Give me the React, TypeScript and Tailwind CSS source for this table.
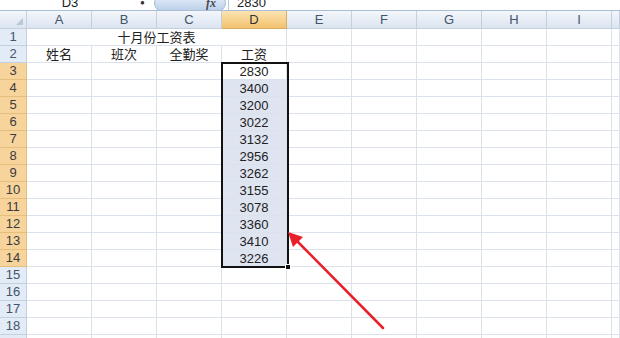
import React from 'react';

const cols = ['A', 'B', 'C', 'D', 'E', 'F', 'G', 'H', 'I', 'J'];
const wages = ['2830', '3400', '3200', '3022', '3132', '2956', '3262', '3155', '3078', '3360', '3410', '3226'];
const headerRow2 = ['姓名', '班次', '全勤奖', '工资'];
const ROWS = 19;

const font = { fontFamily: '"Liberation Sans", "Noto Sans CJK SC", sans-serif' };

function FormulaStrip() {
  return (
    <div className="h-[11px] overflow-hidden bg-white border-b border-[#a9bdd6]">
      <div className="flex items-center h-[18px] -mt-[6px] text-[13px] text-[#222]">
        <div className="w-[140px] text-center">D3</div>
        <div className="w-[14px] text-[8px] text-[#333]">●</div>
        <div className="w-[72px] h-[18px] rounded-full bg-gradient-to-b from-[#e9f1fb] to-[#b9cfe8] border border-[#a4bcd9] flex items-center justify-end pr-[9px]">
          <span className="italic text-[12px] font-bold text-[#4a4a4a]" style={{ fontFamily: '"Liberation Serif", serif' }}>
            fx
          </span>
        </div>
        <div className="w-px h-full bg-[#b9c9dd] ml-[2px]" />
        <div className="pl-[8px]">2830</div>
      </div>
    </div>
  );
}

function ColHeader({ label }: { label: string }) {
  const active = label === 'D';
  return (
    <div
      className={`h-[18px] flex items-center justify-center text-[13px] border-r border-b ${
        active
          ? 'bg-gradient-to-b from-[#fbe3b0] to-[#f3c26e] border-[#d9ad66] text-[#333]'
          : 'bg-gradient-to-b from-[#f4f7fb] to-[#dbe4f0] border-[#c3d0e0] text-[#44546a]'
      }`}
    >
      {label === 'J' ? '' : label}
    </div>
  );
}

function RowHeader({ n }: { n: number }) {
  const active = n >= 3 && n <= 14;
  return (
    <div
      className={`h-[17px] flex items-center justify-center text-[13px] border-r border-b ${
        active
          ? 'bg-[#f7d49b] border-[#e5bd7c] text-[#3b3b3b]'
          : 'bg-[#e3ebf6] border-[#c3d0e0] text-[#44546a]'
      }`}
    >
      {n}
    </div>
  );
}

function Cell({ text, selected }: { text?: string; selected?: boolean }) {
  return (
    <div
      className={`h-[17px] flex items-center justify-center pt-px text-[13px] text-[#222] border-r border-b border-[#dce2ec] whitespace-nowrap ${
        selected ? 'bg-[#dfe4f1]' : 'bg-white'
      }`}
    >
      {text}
    </div>
  );
}

export default function App() {
  const rows = Array.from({ length: ROWS }, (_, i) => i + 1);

  return (
    <div className="relative w-[620px] h-[338px] overflow-hidden bg-white" style={font}>
      <FormulaStrip />

      <div className="relative grid grid-cols-[27px_repeat(9,65px)_1fr]">
        <div className="h-[18px] relative bg-gradient-to-b from-[#f4f7fb] to-[#dbe4f0] border-r border-b border-[#c3d0e0]">
          <div className="absolute right-[3px] bottom-[3px] w-0 h-0 border-l-[7px] border-l-transparent border-b-[7px] border-b-[#b8c6d8]" />
        </div>
        {cols.map((c) => (
          <ColHeader key={c} label={c} />
        ))}

        {rows.map((r) => (
          <React.Fragment key={r}>
            <RowHeader n={r} />
            {r === 1 ? (
              <>
                <div className="col-span-4 h-[17px] flex items-center justify-center pt-px text-[13px] text-[#222] border-r border-b border-[#dce2ec]">
                  十月份工资表
                </div>
                {cols.slice(4).map((c) => (
                  <Cell key={c} />
                ))}
              </>
            ) : (
              cols.map((c, ci) => {
                let text: string | undefined;
                if (r === 2 && ci < 4) text = headerRow2[ci];
                if (ci === 3 && r >= 3 && r <= 14) text = wages[r - 3];
                const selected = ci === 3 && r >= 4 && r <= 14;
                return <Cell key={c} text={text} selected={selected} />;
              })
            )}
          </React.Fragment>
        ))}

        {/* selection border D3:D14 */}
        <div className="absolute left-[221px] top-[51px] w-[68px] h-[206px] border-2 border-[#111] pointer-events-none">
          <div className="absolute -right-[4px] -bottom-[4px] w-[6px] h-[6px] bg-[#111] border border-white" />
        </div>
      </div>

      <svg className="absolute inset-0 pointer-events-none" width="620" height="338" viewBox="0 0 620 338">
        <line x1="383" y1="328" x2="297" y2="241" stroke="#e8202a" strokeWidth="2.5" strokeLinecap="round" />
        <polygon points="288,232 303,237 293,247" fill="#e8202a" />
      </svg>
    </div>
  );
}
